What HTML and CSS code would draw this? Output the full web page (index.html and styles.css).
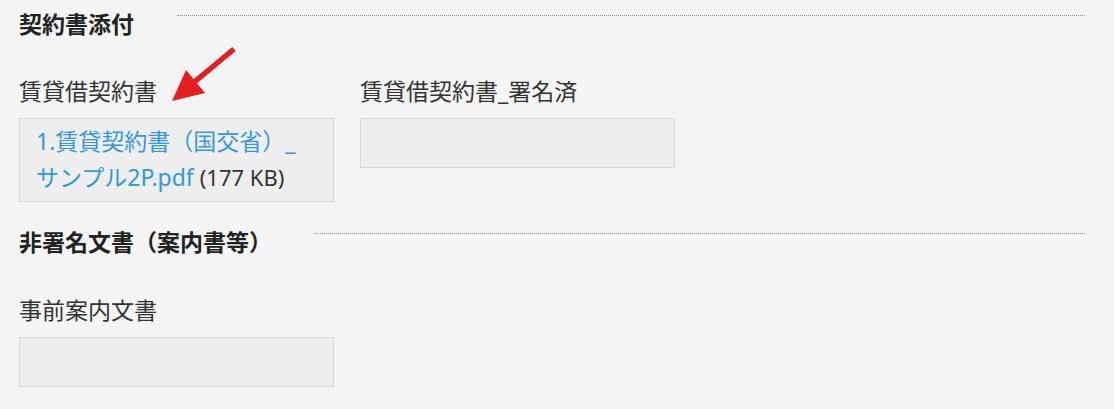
FILE: index.html
```html
<!DOCTYPE html>
<html lang="ja">
<head>
  <meta charset="UTF-8">
  <title>契約書添付</title>
  <link rel="stylesheet" href="styles.css">
</head>
<body>
  <div class="page">
    <div class="group-title">
      <h2>契約書添付</h2>
      <span class="rule"></span>
    </div>
    <div class="fields first">
      <div class="field">
        <div class="label">賃貸借契約書</div>
        <div class="file-box">
          <a href="#" class="file-link">1.賃貸契約書（国交省）_サンプル2P.pdf</a> <span class="file-size">(177 KB)</span>
        </div>
      </div>
      <div class="field">
        <div class="label">賃貸借契約書_署名済</div>
        <div class="file-box empty"></div>
      </div>
    </div>

    <div class="group-title">
      <h2>非署名文書（案内書等）</h2>
      <span class="rule"></span>
    </div>
    <div class="fields">
      <div class="field">
        <div class="label">事前案内文書</div>
        <div class="file-box empty"></div>
      </div>
    </div>

    <!-- 注釈の矢印 -->
    <svg class="arrow" width="90" height="70" viewBox="160 40 90 70">
      <line x1="234" y1="49" x2="192" y2="84" stroke="#e41e1e" stroke-width="5.5"/>
      <polygon points="172,101 186,70 205,93" fill="#e41e1e"/>
    </svg>
  </div>
</body>
</html>
```

FILE: styles.css
```css
body {
  margin: 0;
  background: #f4f4f4;
  font-family: "Noto Sans", "Noto Sans CJK JP", sans-serif;
  color: #333;
}
.page {
  position: relative;
  padding: 9px 29px 0 19px;
}
.group-title {
  display: flex;
  align-items: flex-start;
  gap: 43px;
}
.group-title h2 {
  margin: 0;
  font-size: 23px;
  line-height: 30px;
  font-weight: bold;
  color: #222;
}
.group-title .rule {
  flex: 1;
  margin-top: 6px;
  border-top: 1px dotted #888;
}
.fields {
  display: flex;
  gap: 26px;
  margin-top: 38px;
  margin-bottom: 25px;
}
.fields.first {
  margin-top: 37px;
}
.field {
  width: 315px;
}
.label {
  font-size: 23px;
  line-height: 30px;
  margin-bottom: 12px;
}
.file-box {
  box-sizing: border-box;
  background: #eee;
  border: 1px solid #d8d8d8;
  padding: 4px 16px 6px;
  font-size: 23px;
  line-height: 36px;
}
.file-box.empty {
  height: 50px;
}
.file-link {
  color: #3498db;
  text-decoration: none;
}
.file-size {
  font-size: 22px;
  color: #333;
}
.arrow {
  position: absolute;
  left: 160px;
  top: 40px;
}
```
